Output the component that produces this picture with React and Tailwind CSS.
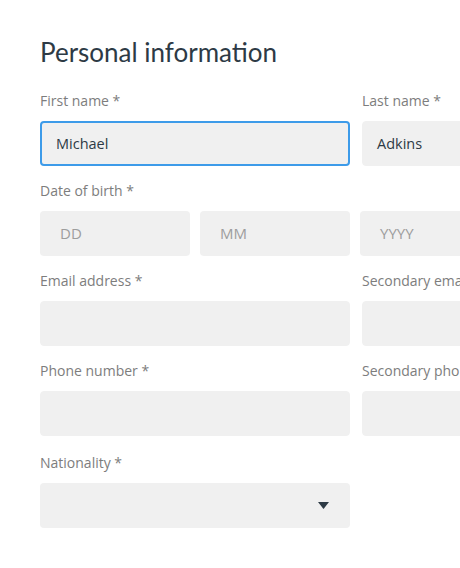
const lato = { fontFamily: "Lato, 'Open Sans', sans-serif" };
const open = { fontFamily: "'Open Sans', Lato, sans-serif" };

function Field({ label, value, placeholder, focused, className = "" }) {
  return (
    <div className={className}>
      <label className="mb-[10px] block text-[14px] leading-5 text-[#7d7d7d]">{label}</label>
      <div
        className={`flex h-[45px] items-center rounded-[4px] bg-[#f0f0f0] px-[14px] text-[14.5px] ${
          focused ? "border-2 border-[#3d9be9] px-[13px]" : "border border-[#f0f0f0]"
        } ${value ? "text-[#2d3a45]" : "text-[#9d9d9d]"}`}
      >
        {value || placeholder}
      </div>
    </div>
  );
}

export default function App() {
  return (
    <div className="h-[568px] w-[460px] overflow-hidden bg-white" style={open}>
      <div className="w-[700px] pl-10 pt-9">
        <h1 className="text-[26px] leading-8 text-[#2d3a45]" style={lato}>
          Personal information
        </h1>

        <div className="mt-[23px] grid grid-cols-[310px_310px] gap-x-3 gap-y-[15px]">
          <Field label="First name *" value="Michael" focused />
          <Field label="Last name *" value="Adkins" />

          <div className="col-span-2">
            <label className="mb-[10px] block text-[14px] leading-5 text-[#7d7d7d]">Date of birth *</label>
            <div className="grid grid-cols-[150px_150px_150px] gap-[10px]">
              {["DD", "MM", "YYYY"].map((p) => (
                <div
                  key={p}
                  className="flex h-[45px] items-center rounded-[4px] bg-[#f0f0f0] px-5 text-[15px] text-[#9d9d9d]"
                >
                  {p}
                </div>
              ))}
            </div>
          </div>

          <Field label="Email address *" />
          <Field label="Secondary email" />
          <Field label="Phone number *" />
          <Field label="Secondary phone" />

          <div className="mt-[2px]">
            <label className="mb-[10px] block text-[14px] leading-5 text-[#7d7d7d]">Nationality *</label>
            <div className="flex h-[45px] items-center justify-end rounded-[4px] bg-[#f0f0f0] pr-[21px]">
              <svg width="11" height="7" viewBox="0 0 11 7">
                <path d="M0 0h11L5.5 7z" fill="#2d3a45" />
              </svg>
            </div>
          </div>
        </div>
      </div>
    </div>
  );
}
